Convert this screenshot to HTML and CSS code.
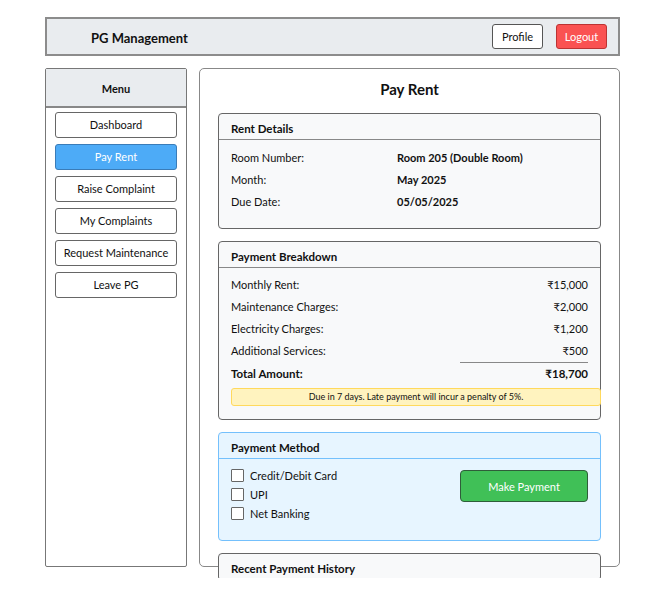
FILE: index.html
```html
<!DOCTYPE html>
<html>
<head>
<meta charset="utf-8">
<link rel="stylesheet" href="styles.css">
</head>
<body>
<div class="app">
  <header class="topbar">
    <div class="brand">PG Management</div>
    <div class="top-actions">
      <button class="btn btn-profile">Profile</button>
      <button class="btn btn-logout">Logout</button>
    </div>
  </header>
  <div class="layout">
    <aside class="sidebar">
      <div class="sidebar-head">Menu</div>
      <nav class="menu">
        <button class="menu-item">Dashboard</button>
        <button class="menu-item active">Pay Rent</button>
        <button class="menu-item">Raise Complaint</button>
        <button class="menu-item">My Complaints</button>
        <button class="menu-item">Request Maintenance</button>
        <button class="menu-item">Leave PG</button>
      </nav>
    </aside>
    <main class="main">
      <h1 class="page-title">Pay Rent</h1>

      <section class="card">
        <div class="card-head">Rent Details</div>
        <div class="card-body">
          <div class="detail-row"><span class="label">Room Number:</span><span class="value">Room 205 (Double Room)</span></div>
          <div class="detail-row"><span class="label">Month:</span><span class="value">May 2025</span></div>
          <div class="detail-row"><span class="label">Due Date:</span><span class="value">05/05/2025</span></div>
        </div>
      </section>

      <section class="card">
        <div class="card-head">Payment Breakdown</div>
        <div class="card-body breakdown">
          <div class="amount-row"><span>Monthly Rent:</span><span>₹15,000</span></div>
          <div class="amount-row"><span>Maintenance Charges:</span><span>₹2,000</span></div>
          <div class="amount-row"><span>Electricity Charges:</span><span>₹1,200</span></div>
          <div class="amount-row"><span>Additional Services:</span><span>₹500</span></div>
          <div class="divider"></div>
          <div class="amount-row total"><span>Total Amount:</span><span>₹18,700</span></div>
          <div class="alert">Due in 7 days. Late payment will incur a penalty of 5%.</div>
        </div>
      </section>

      <section class="card card-blue">
        <div class="card-head">Payment Method</div>
        <div class="card-body method-body">
          <div class="options">
            <label class="option"><input type="checkbox" class="check"><span>Credit/Debit Card</span></label>
            <label class="option"><input type="checkbox" class="check"><span>UPI</span></label>
            <label class="option"><input type="checkbox" class="check"><span>Net Banking</span></label>
          </div>
          <button class="btn-pay">Make Payment</button>
        </div>
      </section>

      <section class="card card-last">
        <div class="card-head">Recent Payment History</div>
      </section>
    </main>
  </div>
</div>
</body>
</html>
```

FILE: styles.css
```css
* { box-sizing: border-box; }

html, body {
  margin: 0;
  padding: 0;
  background: #ffffff;
}

body {
  font-family: Lato, "Noto Sans", sans-serif;
  color: #111;
}

.app {
  width: 575px;
  height: 561px;
  margin: 17px 0 0 45px;
  overflow: hidden;
}

.topbar {
  height: 39px;
  border: 2px solid #8c8c8c;
  background: #e9ecef;
  display: flex;
  align-items: center;
  justify-content: space-between;
  padding: 0 11px 0 44px;
}

.brand {
  font-size: 13px;
  font-weight: 700;
  padding-top: 2px;
}

.top-actions {
  display: flex;
  gap: 13px;
  padding-bottom: 1px;
}

.btn {
  width: 51px;
  height: 25px;
  font-family: inherit;
  font-size: 11px;
  border-radius: 3px;
  padding: 0;
  cursor: pointer;
}

.btn-profile {
  background: #fff;
  border: 1px solid #555;
  color: #111;
}

.btn-logout {
  background: #fa5252;
  border: 1px solid #b33;
  color: #fff;
}

.layout {
  display: grid;
  grid-template-columns: 142px 421px;
  grid-template-rows: 499px;
  gap: 12px;
  margin-top: 12px;
}

.sidebar {
  border: 1px solid #777;
  border-radius: 2px;
  background: #fff;
  min-height: 0;
}

.sidebar-head {
  height: 39px;
  background: #e9ecef;
  border-bottom: 2px solid #888;
  font-size: 11px;
  font-weight: 700;
  display: flex;
  align-items: center;
  justify-content: center;
  padding-top: 2px;
}

.menu {
  display: flex;
  flex-direction: column;
  gap: 6px;
  padding: 4px 9px;
}

.menu-item {
  height: 26px;
  width: 122px;
  background: #fff;
  border: 1px solid #666;
  border-radius: 3px;
  font-family: inherit;
  font-size: 11px;
  color: #111;
  padding: 0 0 2px;
}

.menu-item.active {
  background: #4dabf7;
  border-color: #3a7cb8;
  color: #fff;
}

.main {
  border: 1px solid #888;
  border-radius: 5px;
  padding: 0 18px;
  background: #fff;
  min-height: 0;
}

.page-title {
  margin: 0;
  padding: 10px 0 0;
  height: 44px;
  font-size: 15px;
  line-height: 20px;
  text-align: center;
  font-weight: 700;
}

.card {
  border: 1px solid #666;
  border-radius: 4px;
  background: #f8f9fa;
  margin-bottom: 12px;
}

.card-last {
  margin-top: 12px;
}

.card-head {
  height: 26px;
  border-bottom: 1px solid #888;
  padding: 3px 12px 0;
  font-size: 11.5px;
  font-weight: 700;
  line-height: 23px;
}

.card-body {
  padding: 7px 12px 15px;
  font-size: 11px;
}

.detail-row {
  display: flex;
  line-height: 22px;
}

.detail-row .label {
  width: 166px;
}

.detail-row .value {
  font-weight: 700;
}

.breakdown {
  padding-top: 6px;
  padding-bottom: 13px;
}

.amount-row {
  display: flex;
  justify-content: space-between;
  line-height: 22px;
}

.divider {
  width: 128px;
  margin-left: auto;
  border-top: 1px solid #888;
}

.amount-row.total {
  font-weight: 700;
  font-size: 11.5px;
}

.alert {
  margin-top: 3px;
  margin-right: -13px;
  height: 18px;
  background: #fff3bf;
  border: 1px solid #ffd95c;
  border-radius: 3px;
  font-size: 9px;
  line-height: 16px;
  text-align: center;
}

.card-blue {
  background: #e7f5ff;
  border-color: #74c0fc;
}

.card-blue .card-head {
  border-bottom-color: #74c0fc;
}

.method-body {
  display: flex;
  justify-content: space-between;
  align-items: flex-start;
  padding: 7px 12px 17px;
}

.options {
  display: flex;
  flex-direction: column;
}

.option {
  display: flex;
  align-items: center;
  gap: 6px;
  height: 19px;
}

.check {
  appearance: none;
  -webkit-appearance: none;
  margin: 0;
  width: 13px;
  height: 13px;
  border: 1px solid #666;
  border-radius: 1px;
  background: #fff;
}

.btn-pay {
  margin-top: 4px;
  width: 128px;
  height: 32px;
  background: #40c057;
  border: 1px solid #2f5d3a;
  border-radius: 4px;
  color: #fff;
  font-family: inherit;
  font-size: 11px;
  padding: 0;
}
```
